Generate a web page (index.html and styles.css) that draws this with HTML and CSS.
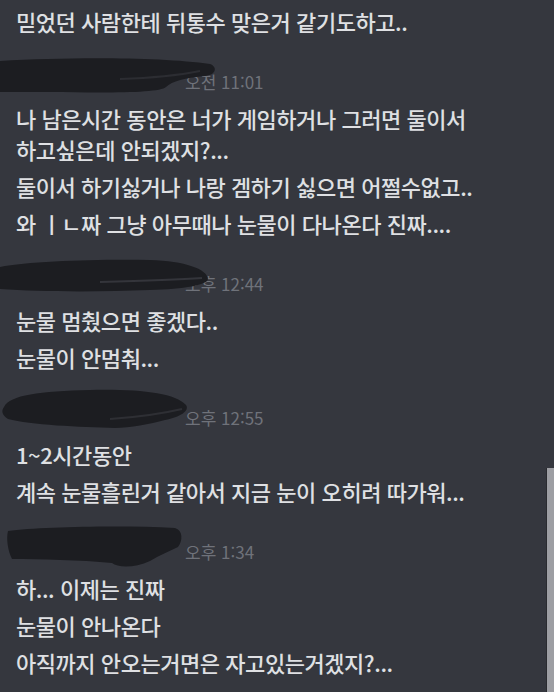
FILE: index.html
```html
<!DOCTYPE html>
<html lang="ko">
<head>
    <meta charset="UTF-8">
    <meta name="viewport" content="width=device-width, initial-scale=1.0">
    <title>채팅</title>
    <link rel="stylesheet" href="styles.css">
</head>
<body>
    <div class="chat">
        <div class="msg">믿었던 사람한테 뒤통수 맞은거 같기도하고..</div>

        <div class="group">
            <div class="meta">
                <span class="redact">
                    <svg viewBox="0 0 230 64" width="230" height="64">
                        <path d="M0 12 C 70 8, 160 8, 210 15 C 218 18, 216 26, 205 27 C 185 29, 172 32, 166 38 C 160 44, 110 44, 50 43 L 0 43 Z" fill="#1c1d21"/>
                        <path d="M120 30 C 150 29, 180 26, 200 22" stroke="#2c2d32" stroke-width="2" fill="none"/>
                    </svg>
                </span>
                <span class="time">오전 11:01</span>
            </div>
            <div class="msg">나 남은시간 동안은 너가 게임하거나 그러면 둘이서 하고싶은데 안되겠지?...</div>
            <div class="msg">둘이서 하기싫거나 나랑 겜하기 싫으면 어쩔수없고..</div>
            <div class="msg">와 ㅣㄴ짜 그냥 아무때나 눈물이 다나온다 진짜....</div>
        </div>

        <div class="group">
            <div class="meta">
                <span class="redact">
                    <svg viewBox="0 0 230 64" width="230" height="64">
                        <path d="M0 16 C 30 10, 100 8, 150 9 C 185 10, 207 18, 208 28 C 207 34, 185 38, 150 39 C 100 41, 40 41, 0 38 Z" fill="#1c1d21"/>
                        <path d="M100 31 C 140 30, 175 29, 202 27" stroke="#34353b" stroke-width="2" fill="none"/>
                    </svg>
                </span>
                <span class="time">오후 12:44</span>
            </div>
            <div class="msg">눈물 멈췄으면 좋겠다..</div>
            <div class="msg">눈물이 안멈춰...</div>
        </div>

        <div class="group">
            <div class="meta">
                <span class="redact">
                    <svg viewBox="0 0 230 64" width="230" height="64">
                        <path d="M4 22 C 10 10, 40 6, 90 5 C 140 4, 175 8, 186 20 C 190 26, 180 32, 165 35 C 150 39, 130 43, 115 43 C 80 42, 30 40, 8 34 C 2 30, 1 26, 4 22 Z" fill="#1c1d21"/>
                        <path d="M110 34 C 140 32, 165 28, 182 24" stroke="#2e2f34" stroke-width="2" fill="none"/>
                    </svg>
                </span>
                <span class="time">오후 12:55</span>
            </div>
            <div class="msg">1~2시간동안</div>
            <div class="msg">계속 눈물흘린거 같아서 지금 눈이 오히려 따가워...</div>
        </div>

        <div class="group">
            <div class="meta">
                <span class="redact">
                    <svg viewBox="0 0 230 64" width="230" height="64">
                        <path d="M8 12 C 40 8, 120 6, 175 9 C 183 11, 183 22, 178 28 C 170 32, 160 36, 150 42 C 135 49, 118 49, 112 44 C 80 41, 40 40, 12 40 C 8 32, 6 20, 8 12 Z" fill="#1c1d21"/>
                    </svg>
                </span>
                <span class="time">오후 1:34</span>
            </div>
            <div class="msg">하... 이제는 진짜</div>
            <div class="msg">눈물이 안나온다</div>
            <div class="msg">아직까지 안오는거면은 자고있는거겠지?...</div>
        </div>
    </div>

    <div class="scroll-thumb"></div>
</body>
</html>
```

FILE: styles.css
```css
body {
    margin: 0;
    padding: 0;
    background-color: #35373e;
    color: #dfe0e3;
    font-family: "Noto Sans CJK KR", "Noto Sans", sans-serif;
    overflow: hidden;
    height: 692px;
}

.chat {
    padding: 3px 24px 0 16px;
}

.msg {
    font-size: 22px;
    font-weight: 500;
    letter-spacing: -0.45px;
    line-height: 31px;
    padding: 3px 0;
    word-break: keep-all;
}

.group {
    margin-top: 29px;
}

.meta {
    display: flex;
    align-items: center;
    height: 24px;
    margin-bottom: 7px;
}

.redact {
    position: relative;
    width: 185px;
    height: 24px;
    margin-left: -16px;
    flex-shrink: 0;
}

.redact svg {
    position: absolute;
    left: 0;
    top: -20px;
    overflow: visible;
    z-index: 1;
}

.time {
    font-size: 17px;
    color: #6f727a;
}

.scroll-thumb {
    position: absolute;
    right: 0;
    top: 468px;
    bottom: 0;
    width: 7px;
    background-color: #9d9ea3;
    border-left: 1px solid #2a2b30;
}
```
